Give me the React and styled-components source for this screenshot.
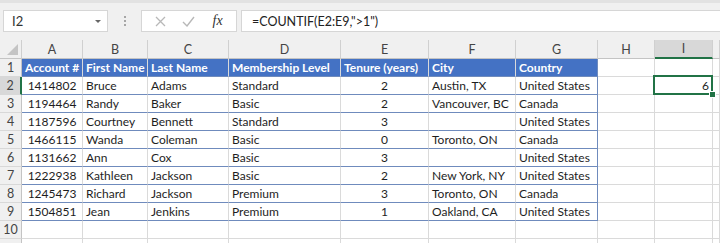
import React from 'react';
import styled, { createGlobalStyle, css } from 'styled-components';

const GlobalStyle = createGlobalStyle`
  body {
    margin: 0;
    background: #ffffff;
    font-family: Lato, "Liberation Sans", sans-serif;
    overflow: hidden;
  }
`;

// column letters and their pixel widths (J just fills what is left)
const columns = [
  { key: 'A', width: 61 },
  { key: 'B', width: 65 },
  { key: 'C', width: 81 },
  { key: 'D', width: 112 },
  { key: 'E', width: 88 },
  { key: 'F', width: 87 },
  { key: 'G', width: 82 },
  { key: 'H', width: 57 },
  { key: 'I', width: 58 },
  { key: 'J', width: null },
];

const headers = ['Account #', 'First Name', 'Last Name', 'Membership Level', 'Tenure (years)', 'City', 'Country'];

const members = [
  ['1414802', 'Bruce', 'Adams', 'Standard', 2, 'Austin, TX', 'United States'],
  ['1194464', 'Randy', 'Baker', 'Basic', 2, 'Vancouver, BC', 'Canada'],
  ['1187596', 'Courtney', 'Bennett', 'Standard', 3, '', 'United States'],
  ['1466115', 'Wanda', 'Coleman', 'Basic', 0, 'Toronto, ON', 'Canada'],
  ['1131662', 'Ann', 'Cox', 'Basic', 3, '', 'United States'],
  ['1222938', 'Kathleen', 'Jackson', 'Basic', 2, 'New York, NY', 'United States'],
  ['1245473', 'Richard', 'Jackson', 'Premium', 3, 'Toronto, ON', 'Canada'],
  ['1504851', 'Jean', 'Jenkins', 'Premium', 1, 'Oakland, CA', 'United States'],
];

const centered = new Set([0, 4]);

const GREEN = '#217346';
const TABLE_LINE = '#6f8bbd';

const TopBar = styled.div`
  height: 40px;
  box-sizing: border-box;
  background: #f0f0f0;
  border-top: 3px solid #e2e2e2;
  padding: 7px 0 0 3px;
  display: flex;
  align-items: flex-start;
  gap: 4px;
`;

const Box = styled.div`
  height: 22px;
  box-sizing: border-box;
  background: #ffffff;
  border: 1px solid #d6d6d6;
  display: flex;
  align-items: center;
`;

const NameBox = styled(Box)`
  width: 105px;
  padding: 0 6px 0 8px;
  justify-content: space-between;
  font-size: 13px;
  color: #333;
`;

const Caret = styled.span`
  width: 0;
  height: 0;
  border-left: 3px solid transparent;
  border-right: 3px solid transparent;
  border-top: 3px solid #666;
`;

const Dots = styled.div`
  width: 25px;
  height: 22px;
  display: flex;
  flex-direction: column;
  align-items: center;
  justify-content: center;
  gap: 2px;

  span {
    width: 2px;
    height: 2px;
    background: #a6a6a6;
  }
`;

const FxBox = styled(Box)`
  width: 96px;
  justify-content: space-around;
  padding: 0 4px;
`;

const FxButton = styled.span`
  width: 22px;
  display: flex;
  justify-content: center;
  color: ${p => (p.$active ? '#333' : '#b8b8b8')};
  font-family: "Liberation Serif", serif;
  font-style: ${p => (p.$active ? 'italic' : 'normal')};
  font-size: 14px;
`;

const FormulaInput = styled(Box)`
  flex: 1;
  border-right: none;
  padding-left: 10px;
  font-size: 12.5px;
  color: #222;
`;

const Sheet = styled.div`
  display: grid;
  grid-template-columns: 22px ${columns.map(c => (c.width ? `${c.width}px` : '1fr')).join(' ')};
  grid-template-rows: 19px;
  grid-auto-rows: 18px;
`;

const Corner = styled.div`
  background: #f0f0f0;
  border-right: 1px solid #cfcfcf;
  border-bottom: 1px solid #c4c4c4;
  box-sizing: border-box;
  display: flex;
  align-items: flex-end;
  justify-content: flex-end;
  padding: 0 3px 3px 0;

  &::before {
    content: '';
    width: 0;
    height: 0;
    border-left: 11px solid transparent;
    border-bottom: 11px solid #c4c4c4;
  }
`;

const ColHead = styled.div`
  box-sizing: border-box;
  background: ${p => (p.$selected ? '#d8d8d8' : '#f0f0f0')};
  border-right: 1px solid #d0d0d0;
  border-bottom: ${p => (p.$selected ? `2px solid ${GREEN}` : '1px solid #c4c4c4')};
  display: flex;
  align-items: center;
  justify-content: center;
  overflow: hidden;
  font-size: 12.5px;
  color: #444;
`;

const RowHead = styled.div`
  box-sizing: border-box;
  background: ${p => (p.$selected ? '#d8d8d8' : '#f0f0f0')};
  border-right: ${p => (p.$selected ? `2px solid ${GREEN}` : '1px solid #c4c4c4')};
  border-bottom: 1px solid #d8d8d8;
  display: flex;
  align-items: center;
  justify-content: center;
  font-size: 12.5px;
  color: #444;
`;

const Cell = styled.div`
  position: relative;
  box-sizing: border-box;
  border-right: 1px solid ${p => (p.$tableEdge ? TABLE_LINE : '#dadada')};
  border-bottom: 1px solid ${p => (p.$inTable ? TABLE_LINE : '#dadada')};
  padding: 0 3px;
  display: flex;
  align-items: center;
  justify-content: ${p => (p.$align === 'center' ? 'center' : p.$align === 'right' ? 'flex-end' : 'flex-start')};
  white-space: nowrap;
  font-size: 12px;
  color: #1e1e1e;

  ${p =>
    p.$header &&
    css`
      background: #4472c4;
      color: #ffffff;
      font-weight: 700;
    `}

  ${p =>
    p.$selected &&
    css`
      &::after {
        content: '';
        position: absolute;
        inset: -2px -1px -1px -2px;
        border: 2px solid ${GREEN};
        pointer-events: none;
      }
    `}
`;

const Handle = styled.span`
  position: absolute;
  right: -4px;
  bottom: -4px;
  width: 5px;
  height: 5px;
  background: ${GREEN};
  border: 1px solid #ffffff;
  z-index: 2;
`;

function FormulaBar() {
  return (
    <TopBar>
      <NameBox>
        <span>I2</span>
        <Caret />
      </NameBox>
      <Dots>
        <span />
        <span />
        <span />
      </Dots>
      <FxBox>
        <FxButton>
          <svg width="11" height="11" viewBox="0 0 11 11">
            <path d="M1 1L10 10M10 1L1 10" stroke="#b8b8b8" strokeWidth="1.3" fill="none" />
          </svg>
        </FxButton>
        <FxButton>
          <svg width="13" height="11" viewBox="0 0 13 11">
            <path d="M1 6L5 10L12 1" stroke="#b8b8b8" strokeWidth="1.4" fill="none" />
          </svg>
        </FxButton>
        <FxButton $active>fx</FxButton>
      </FxBox>
      <FormulaInput>=COUNTIF(E2:E9,"&gt;1")</FormulaInput>
    </TopBar>
  );
}

function renderRow(rowNum) {
  const isHeader = rowNum === 1;
  const record = rowNum >= 2 && rowNum <= 9 ? members[rowNum - 2] : null;
  const inTable = rowNum >= 1 && rowNum <= 9;

  return (
    <React.Fragment key={rowNum}>
      {/* row 11 only peeks in at the bottom edge, so no label */}
      <RowHead $selected={rowNum === 2}>{rowNum <= 10 ? rowNum : ''}</RowHead>
      {columns.map((col, i) => {
        const tableCol = i < 7;
        let value = '';
        let align = 'left';
        if (isHeader && tableCol) value = headers[i];
        if (record && tableCol) {
          value = record[i];
          if (centered.has(i)) align = 'center';
        }
        const selected = rowNum === 2 && col.key === 'I';
        if (selected) {
          value = 6;
          align = 'right';
        }
        return (
          <Cell
            key={col.key}
            $header={isHeader && tableCol}
            $inTable={inTable && tableCol}
            $tableEdge={inTable && i === 6}
            $align={align}
            $selected={selected}
          >
            {value}
            {selected && <Handle />}
          </Cell>
        );
      })}
    </React.Fragment>
  );
}

export default function App() {
  const rows = Array.from({ length: 11 }, (_, i) => i + 1);
  return (
    <>
      <GlobalStyle />
      <FormulaBar />
      <Sheet>
        <Corner />
        {columns.map(col => (
          <ColHead key={col.key} $selected={col.key === 'I'}>
            {col.width ? col.key : ''}
          </ColHead>
        ))}
        {rows.map(renderRow)}
      </Sheet>
    </>
  );
}
